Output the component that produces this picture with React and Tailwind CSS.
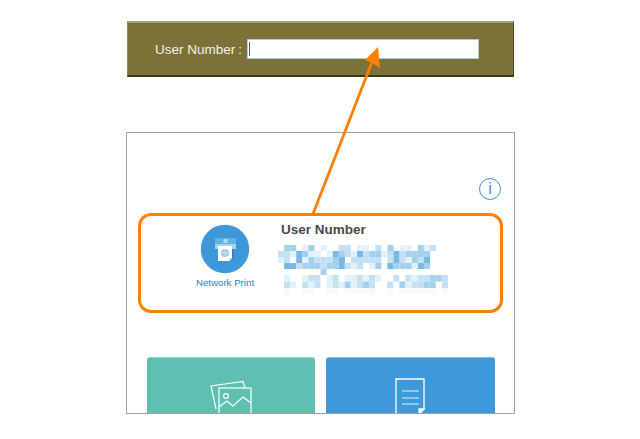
const LINE_ONE = [
  '.cc.ac.a..bb.aa.b.c.aa.cab',
  'bbadcaa.adcbadbccabdbcccc.',
  'ab.dacbbbcd.bbbbb.bdbacbd.',
  '.ddbcccbccdbab.ac.dcccadc.',
  '.......c..................',
];

const LINE_TWO = [
  'a..abb.ab.aababa..b.babbccb',
  'ba.bab.abacabcb..b.cabbcc.b',
  'e..ee..ee.eeeee..e.eeeeee.e',
];

const SHADES = { a: '#e3f1fa', b: '#c4e1f3', c: '#a3d0ed', d: '#78b9e6', e: '#f5fafd' };

function Mosaic({ rows, cell, h }) {
  const w = rows[0].length * cell;
  return (
    <svg width={w} height={rows.length * h} viewBox={`0 0 ${w} ${rows.length * h}`} className="block">
      {rows.map((row, y) =>
        row.split('').map((c, x) =>
          c === '.' ? null : <rect key={`${x}-${y}`} x={x * cell} y={y * h} width={cell} height={h} fill={SHADES[c]} />
        )
      )}
    </svg>
  );
}

function PrintIcon() {
  return (
    <svg width="21" height="26" viewBox="0 0 21 26">
      <path d="M17 11h2l-1 12h-3z" fill="#2f7fbd" />
      <rect x="0" y="2" width="21" height="6" fill="#5db4e3" />
      <rect x="0" y="8" width="21" height="5" fill="#a5d4f0" />
      <path d="M3 10h14v12l-3 3H3z" fill="#fff" />
      <path d="M14 25v-3h3z" fill="#cfe3f2" />
      <circle cx="10" cy="17" r="4" fill="#9cc9ea" />
      <path d="M6 17h8M10 13v8" stroke="#d6e9f6" strokeWidth=".7" />
      <path d="M8.5 4h4M8.5 6h4" stroke="#fff" strokeWidth="1" />
    </svg>
  );
}

function PhotoIcon() {
  return (
    <svg width="42" height="34" viewBox="0 0 42 34" fill="none" stroke="#fff" strokeWidth="1.2">
      <path d="M6 28 1 5l32-4.5L35 7" />
      <rect x="9" y="7" width="32" height="26" fill="#5fbfb1" />
      <circle cx="16" cy="15" r="2.4" />
      <path d="m9 26 8-6 6 5 10-9 8 6" />
    </svg>
  );
}

function DocIcon() {
  return (
    <svg width="31" height="36" viewBox="0 0 31 36" fill="none" stroke="#fff" strokeWidth="1.3">
      <path d="M1 36V1h28v30l-5 5" />
      <path d="M24 36v-5h5z" fill="#fff" />
      <path d="M7 13h17M7 20h17M7 26h17" strokeWidth="1.2" opacity=".85" />
    </svg>
  );
}

export default function App() {
  return (
    <div className="relative w-[640px] h-[439px] overflow-hidden bg-white font-['Liberation_Sans',Arial,sans-serif]">
      {/* olive device display */}
      <div className="ml-[127px] mt-[21px] w-[387px] h-[56px] flex items-center pl-[27px] bg-[#7c7138] border-t-2 border-t-[#a79f78] border-b-2 border-b-[#3e3818] border-l border-l-[#8f8659] border-r border-r-[#4d4620]">
        <span className="pt-px text-[13.5px] leading-none text-[#f3f1e4] whitespace-nowrap">User Number</span>
        <span className="pt-px ml-[3px] text-[13.5px] leading-none text-[#f3f1e4]">:</span>
        <div className="ml-[5px] w-[232px] h-[20px] bg-white border border-[#a9cce6] flex items-center pl-[1px]">
          <div className="w-px h-[14px] bg-[#555]" />
        </div>
      </div>

      {/* phone screen */}
      <div className="ml-[126px] mt-[55px] w-[389px] h-[282px] border border-[#a0a0a0] overflow-hidden pt-[45px] px-[11px] box-border">
        <div className="flex justify-end pr-[2px] h-[26px]">
          <div className="w-[22px] h-[22px] rounded-full border-[1.5px] border-[#3e94d8] flex items-center justify-center text-[#3e94d8] text-[16px] leading-none">
            i
          </div>
        </div>
        <div className="mt-[9px] h-[100px] rounded-[13px] border-[3px] border-[#ff8000] flex gap-[27px] pl-[55px] box-border">
          <div className="w-[58px] shrink-0 flex flex-col items-center pt-[9px]">
            <div className="w-[48px] h-[48px] shrink-0 rounded-full bg-[#3e97d8] flex items-center justify-center shadow-[0_0_1px_#3e97d8]">
              <PrintIcon />
            </div>
            <span className="mt-[4px] text-[9.7px] leading-[12px] text-[#2a7fbf] whitespace-nowrap">Network Print</span>
          </div>
          <div className="flex flex-col pt-[6px]">
            <span className="text-[13.5px] leading-[16px] font-bold text-[#4a4a4a]">User Number</span>
            <div className="mt-[7px] -ml-[3px]"><Mosaic rows={LINE_ONE} cell={6.08} h={6} /></div>
            <div className="ml-[3px]"><Mosaic rows={LINE_TWO} cell={6.07} h={6.5} /></div>
          </div>
        </div>
        <div className="mt-[44px] flex gap-[11px] pl-[9px]">
          <div className="w-[168px] h-[100px] shrink-0 rounded-[3px] bg-[#5fbfb1] border-t border-t-[#8fd3c8] flex justify-center pt-[23px]">
            <PhotoIcon />
          </div>
          <div className="w-[169px] h-[100px] shrink-0 rounded-[3px] bg-[#3f98d9] border-t border-t-[#7ab8e6] flex justify-center pt-[20px]">
            <DocIcon />
          </div>
        </div>
      </div>

      {/* callout arrow */}
      <svg className="absolute left-0 top-0" width="640" height="439" viewBox="0 0 640 439" fill="none">
        <path d="M313 214 372 62" stroke="#ff8000" strokeWidth="2.8" />
        <path d="M378 47 380 68 372 63 365 60z" fill="#ff8000" />
      </svg>
    </div>
  );
}
